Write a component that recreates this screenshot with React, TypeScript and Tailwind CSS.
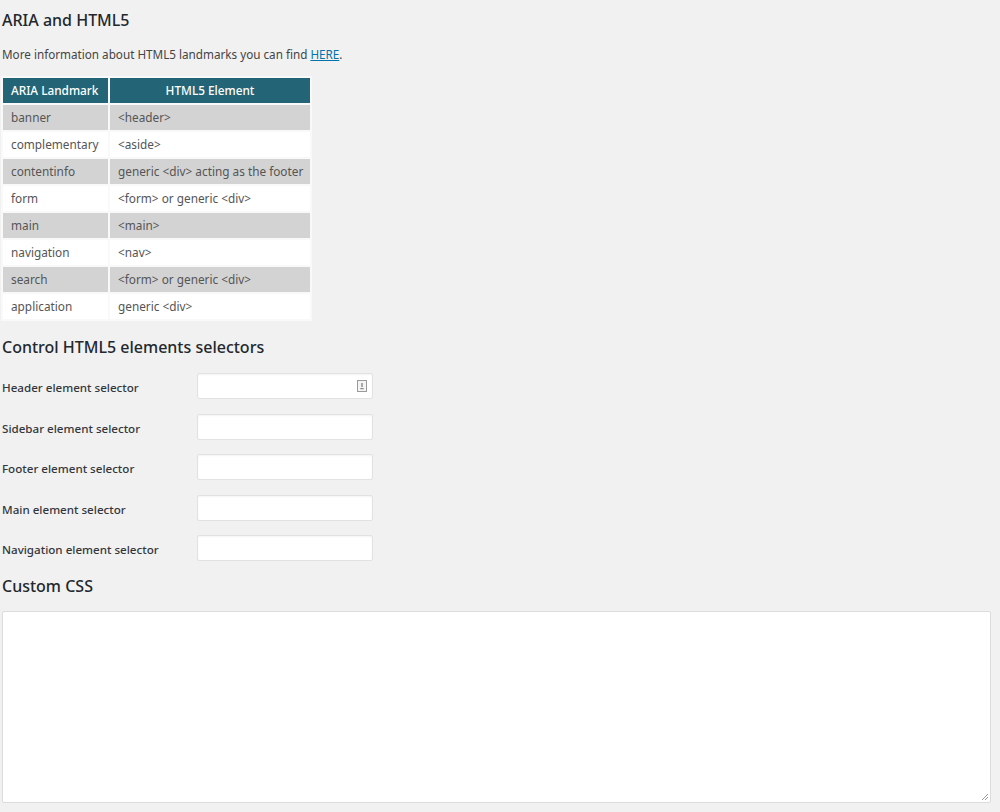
import React from "react";

const rows: [string, string][] = [
  ["banner", "<header>"],
  ["complementary", "<aside>"],
  ["contentinfo", "generic <div> acting as the footer"],
  ["form", "<form> or generic <div>"],
  ["main", "<main>"],
  ["navigation", "<nav>"],
  ["search", "<form> or generic <div>"],
  ["application", "generic <div>"],
];

const fields = [
  "Header element selector",
  "Sidebar element selector",
  "Footer element selector",
  "Main element selector",
  "Navigation element selector",
];

export default function App() {
  return (
    <div
      className="w-[1000px] h-[812px] overflow-hidden bg-[#f1f1f1] text-[#444] text-[13px]"
      style={{ fontFamily: '"Noto Sans", "Open Sans", sans-serif' }}
    >
      <div className="pl-[2px] pt-[8px]">
        <h2 className="text-[16px] font-medium text-[#23282d] leading-[24px]">ARIA and HTML5</h2>
        <p className="mt-[13px] text-[11.7px] leading-[18px] text-[#444]">
          More information about HTML5 landmarks you can find{" "}
          <a href="#" className="text-[#0073aa] underline">HERE</a>.
        </p>
        <table className="mt-[13px] table-fixed w-[311px] border-separate border-spacing-[2px] bg-[#f9f9f9] text-[11.8px] -ml-[1px]">
          <thead>
            <tr>
              <th className="bg-[#236577] text-white font-medium h-[25px] w-[105px] pl-[8px] text-left">ARIA Landmark</th>
              <th className="bg-[#236577] text-white font-medium h-[25px] text-center">HTML5 Element</th>
            </tr>
          </thead>
          <tbody>
            {rows.map(([a, b], i) => (
              <tr key={a}>
                <td className={`${i % 2 === 0 ? "bg-[#d3d3d3]" : "bg-white"} h-[25px] pl-[8px] text-[#555]`}>{a}</td>
                <td className={`${i % 2 === 0 ? "bg-[#d3d3d3]" : "bg-white"} h-[25px] pl-[8px] text-[#555] whitespace-nowrap`}>{b}</td>
              </tr>
            ))}
          </tbody>
        </table>
        <h2 className="mt-[14px] text-[16px] font-medium text-[#23282d] leading-[24px]">Control HTML5 elements selectors</h2>
        <div className="mt-[14px] flex flex-col gap-[14.5px]">
          {fields.map((f, i) => (
            <div key={f} className="flex items-center h-[26px]">
              <label className="w-[195px] text-[11.6px] font-medium text-[#32373c] pt-[4px]">{f}</label>
              <div className="relative w-[176px] h-[26px] bg-white border border-[#e2e2e2] rounded-[2px] shadow-[inset_0_1px_2px_rgba(0,0,0,0.05)]">
                {i === 0 && (
                  <svg className="absolute right-[4px] top-[5px]" width="12" height="14" viewBox="0 0 12 14">
                    <rect x="1.5" y="1.5" width="9" height="11" fill="#f4f4f4" stroke="#9a9a9a" />
                    <rect x="5.3" y="4" width="1.4" height="4" fill="#888" />
                    <rect x="4.3" y="9" width="3.4" height="1.2" fill="#888" />
                  </svg>
                )}
              </div>
            </div>
          ))}
        </div>
        <h2 className="mt-[13px] text-[16px] font-medium text-[#23282d] leading-[24px]">Custom CSS</h2>
        <div className="mt-[13px] relative w-[989px] h-[192px] bg-white border border-[#dcdcdc] rounded-[2px]">
          <svg className="absolute right-[1px] bottom-[1px]" width="8" height="8" viewBox="0 0 8 8">
            <path d="M7 1 L1 7 M7 4 L4 7" stroke="#999" strokeWidth="1" />
          </svg>
        </div>
      </div>
    </div>
  );
}
